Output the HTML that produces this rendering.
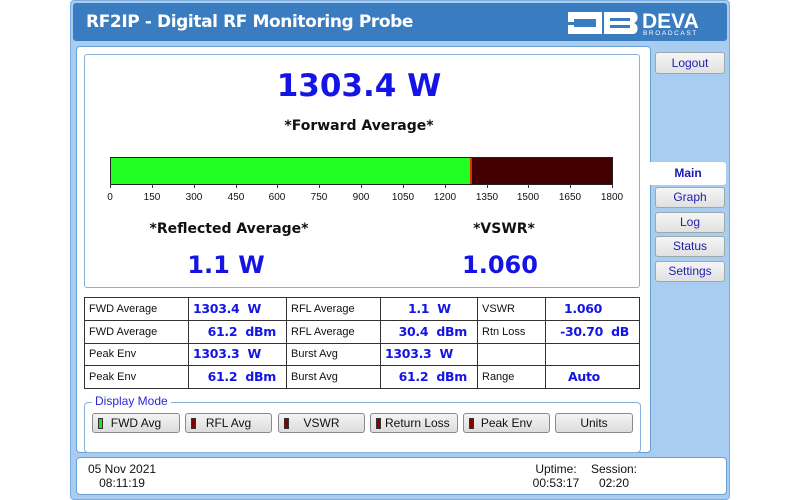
<!DOCTYPE html>
<html><head><meta charset="utf-8"><style>
*{margin:0;padding:0;box-sizing:border-box}
body{width:800px;height:500px;background:#fff;position:relative;overflow:hidden;font-family:"DejaVu Sans","Liberation Sans",sans-serif}
.a{position:absolute}
.frame{left:70px;top:0;width:660px;height:500px;background:#a9cdf1;border:1px solid #7aaee0;border-radius:4px}
.hdr{left:73px;top:3px;width:654px;height:38px;background:#3a7cc0;border-radius:3px}
.title{left:86px;top:12px;color:#fff;font-size:17px;font-weight:bold;letter-spacing:-0.4px}
.panel{background:#fff;border:1px solid #6a9fd6;border-radius:4px}
.box{border:1px solid #8ab0d8;border-radius:3px;background:#fff}
.blue{color:#1414e6;font-weight:bold}
.c{text-align:center}
table{border-collapse:collapse;position:absolute;left:84px;top:297px;width:556px;table-layout:fixed}
td{border:1px solid #333;height:22.75px;font-size:11px;padding:0 4px;color:#111;white-space:nowrap;overflow:hidden;font-family:"Liberation Sans",sans-serif;line-height:20px}
td.v{color:#1414e6;font-weight:bold;font-size:12.5px;text-align:right;padding-right:10px;font-family:"DejaVu Sans",sans-serif;letter-spacing:-0.3px}
.nb{background:linear-gradient(#f6f6f6,#e0e0e0);border:1px solid #9aa;border-radius:3px;color:#2020b0;font-size:12px;text-align:center;line-height:19px;font-family:"Liberation Sans",sans-serif}
.btn{top:413px;height:20px;background:linear-gradient(#f4f4f4,#dcdcdc);border:1px solid #8a8a8a;border-radius:3px;font-size:12px;color:#111;line-height:18px;text-align:center;font-family:"Liberation Sans",sans-serif;white-space:nowrap}
.led{position:absolute;left:5px;top:4px;width:5px;height:11px;border:1px solid #333;background:#8a0000}
.tk{font-size:10px;color:#111;top:192px;width:40px;text-align:center;font-family:"Liberation Sans",sans-serif}
.tl{top:184px;width:1px;height:4px;background:#333}
</style></head><body>
<div class="a frame"></div>
<div class="a hdr"></div>
<div class="a title">RF2IP - Digital RF Monitoring Probe</div>
<svg class="a" style="left:566px;top:10px" width="160" height="28" viewBox="0 0 160 28">
<rect x="2" y="2" width="34" height="22" fill="#fff"/><rect x="8" y="9" width="22" height="8" fill="#3a7cc0"/><rect x="2" y="12" width="9" height="3" fill="#3a7cc0"/>
<path d="M38 2 H68 a6 6 0 0 1 0 11 a6 6 0 0 1 0 11 H38Z" fill="#fff"/><rect x="44" y="8" width="20" height="3" fill="#3a7cc0"/><rect x="44" y="15" width="20" height="3" fill="#3a7cc0"/>
<text x="76" y="18" fill="#fff" font-family="Liberation Sans" font-weight="bold" font-size="21">DEVA</text>
<text x="77" y="25" fill="#fff" font-family="Liberation Sans" font-size="6.5" letter-spacing="1.6">BROADCAST</text>
</svg>
<div class="a panel" style="left:76px;top:46px;width:575px;height:407px"></div>
<div class="a box" style="left:84px;top:54px;width:556px;height:234px"></div>
<div class="a blue c" style="left:84px;top:68px;width:550px;font-size:31px">1303.4 W</div>
<div class="a c" style="left:84px;top:118px;width:550px;font-size:14px;font-weight:bold;color:#111">*Forward Average*</div>
<div class="a" style="left:110px;top:157px;width:503px;height:28px;border:1px solid #222;background:#440000">
<div style="width:361px;height:100%;background:#22ff22;border-right:2px solid #e03000"></div></div>
<div class="a tl" style="left:110px"></div><div class="a tk" style="left:90px">0</div>
<div class="a tl" style="left:152px"></div><div class="a tk" style="left:132px">150</div>
<div class="a tl" style="left:194px"></div><div class="a tk" style="left:174px">300</div>
<div class="a tl" style="left:236px"></div><div class="a tk" style="left:216px">450</div>
<div class="a tl" style="left:277px"></div><div class="a tk" style="left:257px">600</div>
<div class="a tl" style="left:319px"></div><div class="a tk" style="left:299px">750</div>
<div class="a tl" style="left:361px"></div><div class="a tk" style="left:341px">900</div>
<div class="a tl" style="left:403px"></div><div class="a tk" style="left:383px">1050</div>
<div class="a tl" style="left:445px"></div><div class="a tk" style="left:425px">1200</div>
<div class="a tl" style="left:487px"></div><div class="a tk" style="left:467px">1350</div>
<div class="a tl" style="left:528px"></div><div class="a tk" style="left:508px">1500</div>
<div class="a tl" style="left:570px"></div><div class="a tk" style="left:550px">1650</div>
<div class="a tl" style="left:612px"></div><div class="a tk" style="left:592px">1800</div>
<div class="a c" style="left:129px;top:221px;width:200px;font-size:14px;font-weight:bold;color:#111">*Reflected Average*</div>
<div class="a c" style="left:404px;top:221px;width:200px;font-size:14px;font-weight:bold;color:#111">*VSWR*</div>
<div class="a blue c" style="left:126px;top:251px;width:200px;font-size:24px">1.1 W</div>
<div class="a blue c" style="left:400px;top:251px;width:200px;font-size:24px">1.060</div>
<table>
<colgroup><col style="width:104px"><col style="width:98px"><col style="width:94px"><col style="width:97px"><col style="width:68px"><col></colgroup>
<tr><td>FWD Average</td><td class="v">1303.4&nbsp; W&nbsp;&nbsp;&nbsp;&nbsp;</td><td>RFL Average</td><td class="v">1.1&nbsp; W&nbsp;&nbsp;&nbsp;&nbsp;</td><td>VSWR</td><td class="v" style="text-align:left;padding-left:18px">1.060</td></tr>
<tr><td>FWD Average</td><td class="v">61.2&nbsp; dBm</td><td>RFL Average</td><td class="v">30.4&nbsp; dBm</td><td>Rtn Loss</td><td class="v">-30.70&nbsp; dB</td></tr>
<tr><td>Peak Env</td><td class="v">1303.3&nbsp; W&nbsp;&nbsp;&nbsp;&nbsp;</td><td>Burst Avg</td><td class="v">1303.3&nbsp; W&nbsp;&nbsp;&nbsp;&nbsp;</td><td></td><td></td></tr>
<tr><td>Peak Env</td><td class="v">61.2&nbsp; dBm</td><td>Burst Avg</td><td class="v">61.2&nbsp; dBm</td><td>Range</td><td class="v" style="text-align:left;padding-left:22px">Auto</td></tr>
</table>
<div class="a" style="left:84px;top:402px;width:557px;height:51px;border:1px solid #8ab0d8;border-radius:4px"></div>
<div class="a" style="left:92px;top:394px;background:#fff;padding:0 3px;font-size:12px;color:#2a2ad0;font-family:'Liberation Sans',sans-serif">Display Mode</div>
<div class="a btn" style="left:92px;width:88px"><span class="led" style="background:#22dd22"></span>FWD Avg</div>
<div class="a btn" style="left:185px;width:87px"><span class="led"></span>RFL Avg</div>
<div class="a btn" style="left:278px;width:87px"><span class="led"></span>VSWR</div>
<div class="a btn" style="left:370px;width:88px"><span class="led"></span>&nbsp;&nbsp;Return Loss</div>
<div class="a btn" style="left:463px;width:87px"><span class="led"></span>Peak Env</div>
<div class="a btn" style="left:555px;width:78px">Units</div>
<div class="a panel" style="left:76px;top:457px;width:651px;height:38px"></div>
<div class="a" style="left:88px;top:462px;font-size:12px;color:#111;text-align:center;line-height:14px;font-family:'Liberation Sans',sans-serif">05 Nov 2021<br>08:11:19</div>
<div class="a" style="left:528px;top:462px;font-size:12px;color:#111;text-align:center;line-height:14px;width:56px;font-family:'Liberation Sans',sans-serif">Uptime:<br>00:53:17</div>
<div class="a" style="left:586px;top:462px;font-size:12px;color:#111;text-align:center;line-height:14px;width:56px;font-family:'Liberation Sans',sans-serif">Session:<br>02:20</div>
<div class="a nb" style="left:655px;top:52px;width:70px;height:22px;line-height:20px">Logout</div>
<div class="a" style="left:650px;top:162px;width:76px;height:23px;background:#fff;border-radius:0 3px 3px 0;color:#1a1ab0;font-weight:bold;font-size:12px;text-align:center;line-height:23px;font-family:'Liberation Sans',sans-serif">Main</div>
<div class="a nb" style="left:655px;top:187px;width:70px;height:21px">Graph</div>
<div class="a nb" style="left:655px;top:212px;width:70px;height:21px">Log</div>
<div class="a nb" style="left:655px;top:236px;width:70px;height:21px">Status</div>
<div class="a nb" style="left:655px;top:261px;width:70px;height:21px">Settings</div>
</body></html>
